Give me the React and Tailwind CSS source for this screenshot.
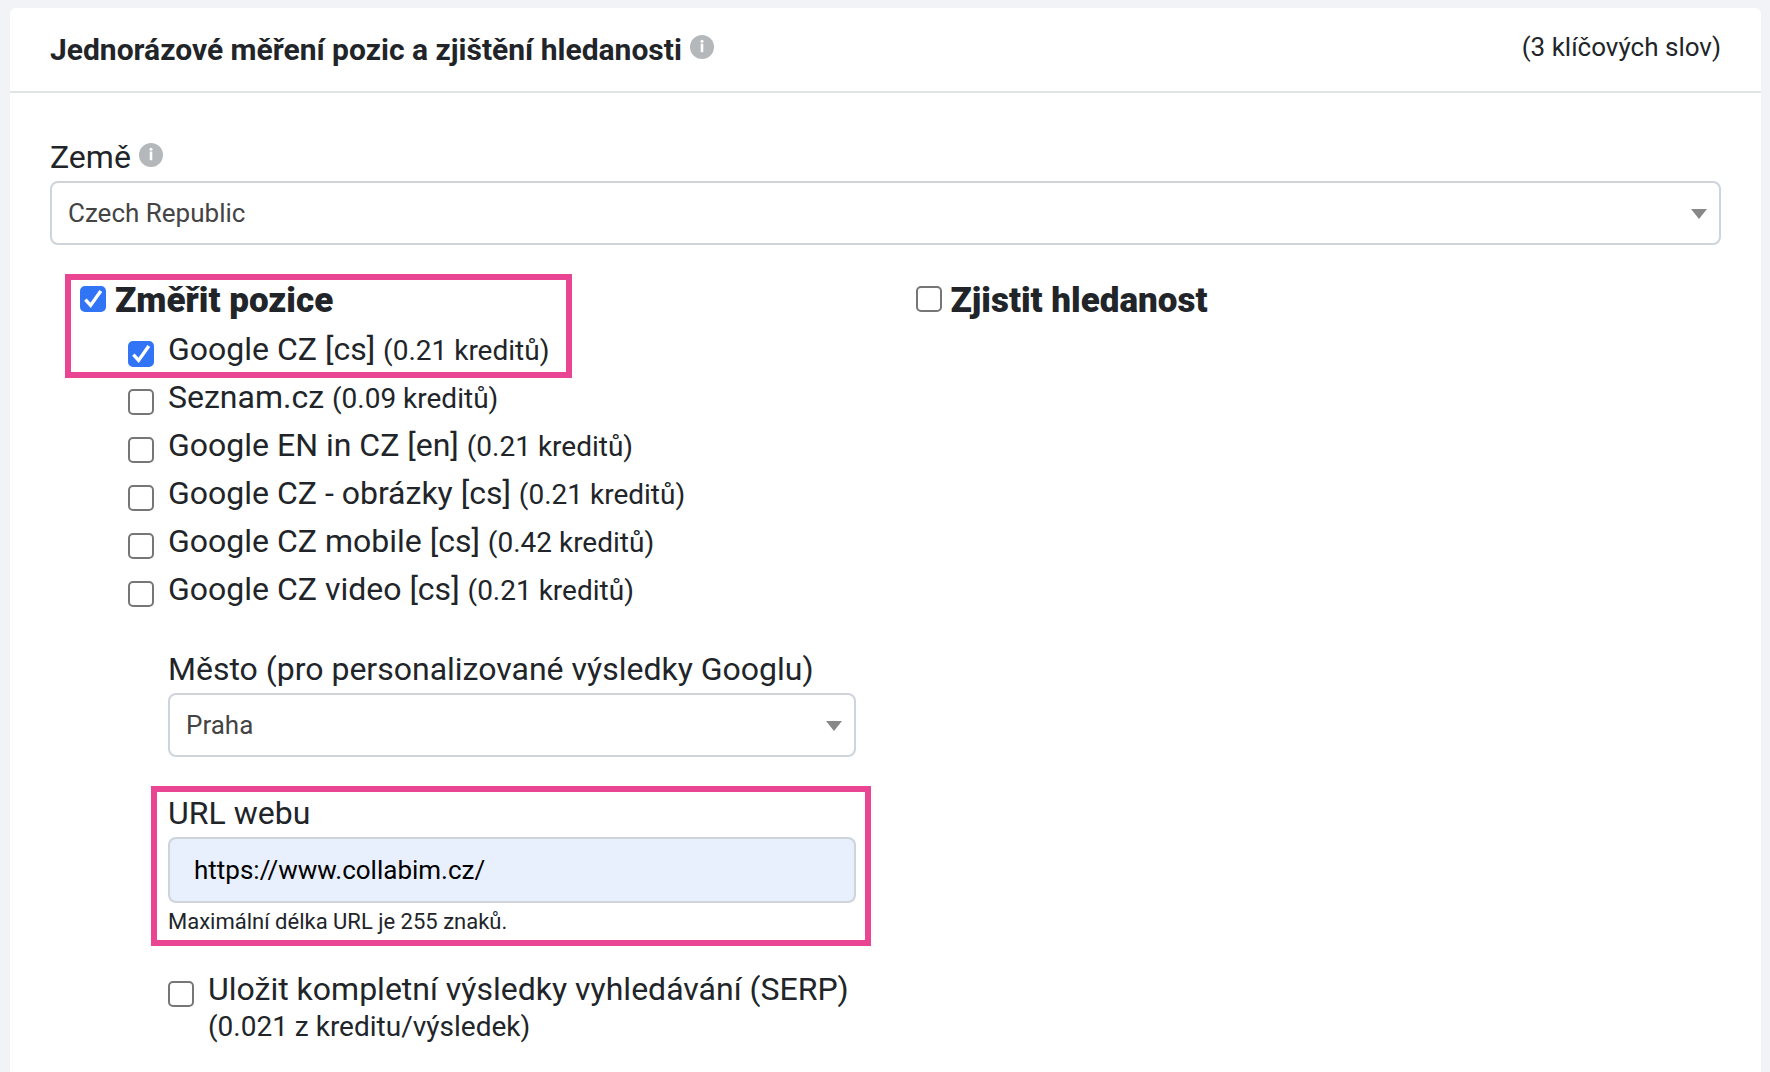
import React, { useState } from 'react';

const ENGINES = [
  { id: 'google-cz', name: 'Google CZ [cs]', price: '(0.21 kreditů)' },
  { id: 'seznam', name: 'Seznam.cz', price: '(0.09 kreditů)' },
  { id: 'google-en', name: 'Google EN in CZ [en]', price: '(0.21 kreditů)' },
  { id: 'google-images', name: 'Google CZ - obrázky [cs]', price: '(0.21 kreditů)' },
  { id: 'google-mobile', name: 'Google CZ mobile [cs]', price: '(0.42 kreditů)' },
  { id: 'google-video', name: 'Google CZ video [cs]', price: '(0.21 kreditů)' },
];

function InfoIcon() {
  return (
    <svg viewBox="0 0 24 24" className="w-6 h-6 shrink-0" aria-hidden="true">
      <circle cx="12" cy="12" r="12" fill="#b4b8bb" />
      <circle cx="12" cy="6.2" r="1.5" fill="#fff" />
      <rect x="10.7" y="8.6" width="2.6" height="8.6" fill="#fff" />
    </svg>
  );
}

function Checkbox({ id, defaultChecked }) {
  return (
    <span className="relative block w-[26px] h-[26px] shrink-0">
      <input
        id={id}
        type="checkbox"
        defaultChecked={defaultChecked}
        className="peer block w-[26px] h-[26px] appearance-none rounded-[5px] border-2 border-[#767676] bg-white checked:border-[#3174f6] checked:bg-[#3174f6]"
      />
      <svg
        viewBox="0 0 26 26"
        className="hidden peer-checked:block absolute inset-0 w-[26px] h-[26px] pointer-events-none"
        aria-hidden="true"
      >
        <path d="M5.4 13.6 L10.6 19.4 L20.8 5" fill="none" stroke="#fff" strokeWidth="3.4" />
      </svg>
    </span>
  );
}

function Select({ id, options }) {
  const [value, setValue] = useState(options[0]);

  return (
    <div className="relative">
      <select
        id={id}
        value={value}
        onChange={(e) => setValue(e.target.value)}
        className="block w-full h-16 appearance-none rounded-lg border-2 border-[#ced4da] bg-white pl-4 pr-12 text-[26px] text-[#444]"
      >
        {options.map((option) => (
          <option key={option}>{option}</option>
        ))}
      </select>
      <svg
        viewBox="0 0 16 10"
        className="absolute right-[14px] top-7 w-4 h-[10px] pointer-events-none"
        aria-hidden="true"
      >
        <path d="M0 0h16L8 10z" fill="#888" />
      </svg>
    </div>
  );
}

// Pink frame that points the reader at a part of the form
function Highlight({ className }) {
  return <div className={`absolute border-6 border-[#ea4592] pointer-events-none ${className}`} />;
}

export default function App() {
  return (
    <div className="min-h-screen flex flex-col bg-[#f1f3f7] pl-[10px] pr-[9px] pt-2 font-['Roboto',sans-serif] text-[#212529]">
      <div className="grow rounded-t-md bg-white">
        {/* Header */}
        <header className="flex items-start justify-between border-b-2 border-[#e1e4e5] px-10 pt-5 pb-5">
          <div className="flex items-start gap-2">
            <h1 className="text-[30px] leading-[43px] font-bold">Jednorázové měření pozic a zjištění hledanosti</h1>
            <div className="pt-[7px]">
              <InfoIcon />
            </div>
          </div>
          <span className="text-[26px] leading-[39px]">(3 klíčových slov)</span>
        </header>

        <form className="px-10 pt-10">
          {/* Country */}
          <div className="flex items-start gap-2">
            <label htmlFor="country" className="text-[32px] leading-[48px]">
              Země
            </label>
            <div className="pt-[10px]">
              <InfoIcon />
            </div>
          </div>
          <Select id="country" options={['Czech Republic', 'Slovakia', 'Poland']} />

          <div className="grid grid-cols-2 pt-[30px]">
            {/* Positions */}
            <section className="px-[30px]">
              <div className="relative">
                <Highlight className="-left-[15px] -top-px w-[507px] h-[104px]" />
                <div className="flex items-start gap-[9px]">
                  <div className="pt-[11px]">
                    <Checkbox id="positions" defaultChecked />
                  </div>
                  <label htmlFor="positions" className="pt-0.5 text-[35px] leading-[48px] font-black">
                    Změřit pozice
                  </label>
                </div>
              </div>

              <ul className="pl-12">
                {ENGINES.map((engine, idx) => (
                  <li key={engine.id} className="flex items-start gap-[14px]">
                    <div className="pt-4 -mb-2">
                      <Checkbox id={engine.id} defaultChecked={idx === 0} />
                    </div>
                    <label htmlFor={engine.id} className="text-[32px] leading-[48px]">
                      {engine.name} <span className="text-[28px] leading-none">{engine.price}</span>
                    </label>
                  </li>
                ))}
              </ul>

              <div className="pl-[88px] pt-8">
                <label htmlFor="city" className="block text-[32px] leading-[48px]">
                  Město (pro personalizované výsledky Googlu)
                </label>
                <Select id="city" options={['Praha', 'Brno', 'Ostrava']} />

                <div className="relative mt-8">
                  <Highlight className="-left-[17px] -right-[15px] -top-[3px] h-[160px]" />
                  <label htmlFor="url" className="block text-[32px] leading-[48px]">
                    URL webu
                  </label>
                  <input
                    id="url"
                    type="text"
                    maxLength={255}
                    defaultValue="https://www.collabim.cz/"
                    className="block w-full h-[66px] rounded-lg border-2 border-[#ced4da] bg-[#e8effd] px-6 text-[26px] text-black"
                  />
                  <p className="pt-[3px] text-[22px] leading-8">Maximální délka URL je 255 znaků.</p>
                </div>

                <div className="flex items-start gap-[14px] pt-[27px]">
                  <div className="pt-4">
                    <Checkbox id="serp" />
                  </div>
                  <label htmlFor="serp" className="text-[32px] leading-[48px]">
                    Uložit kompletní výsledky vyhledávání (SERP)
                    <span className="block text-[28px] leading-7">(0.021 z kreditu/výsledek)</span>
                  </label>
                </div>
              </div>
            </section>

            {/* Search volume */}
            <section className="px-[30px]">
              <div className="flex items-start gap-[9px]">
                <div className="pt-[11px]">
                  <Checkbox id="volume" />
                </div>
                <label htmlFor="volume" className="pt-0.5 text-[35px] leading-[48px] font-black">
                  Zjistit hledanost
                </label>
              </div>
            </section>
          </div>
        </form>
      </div>
    </div>
  );
}
